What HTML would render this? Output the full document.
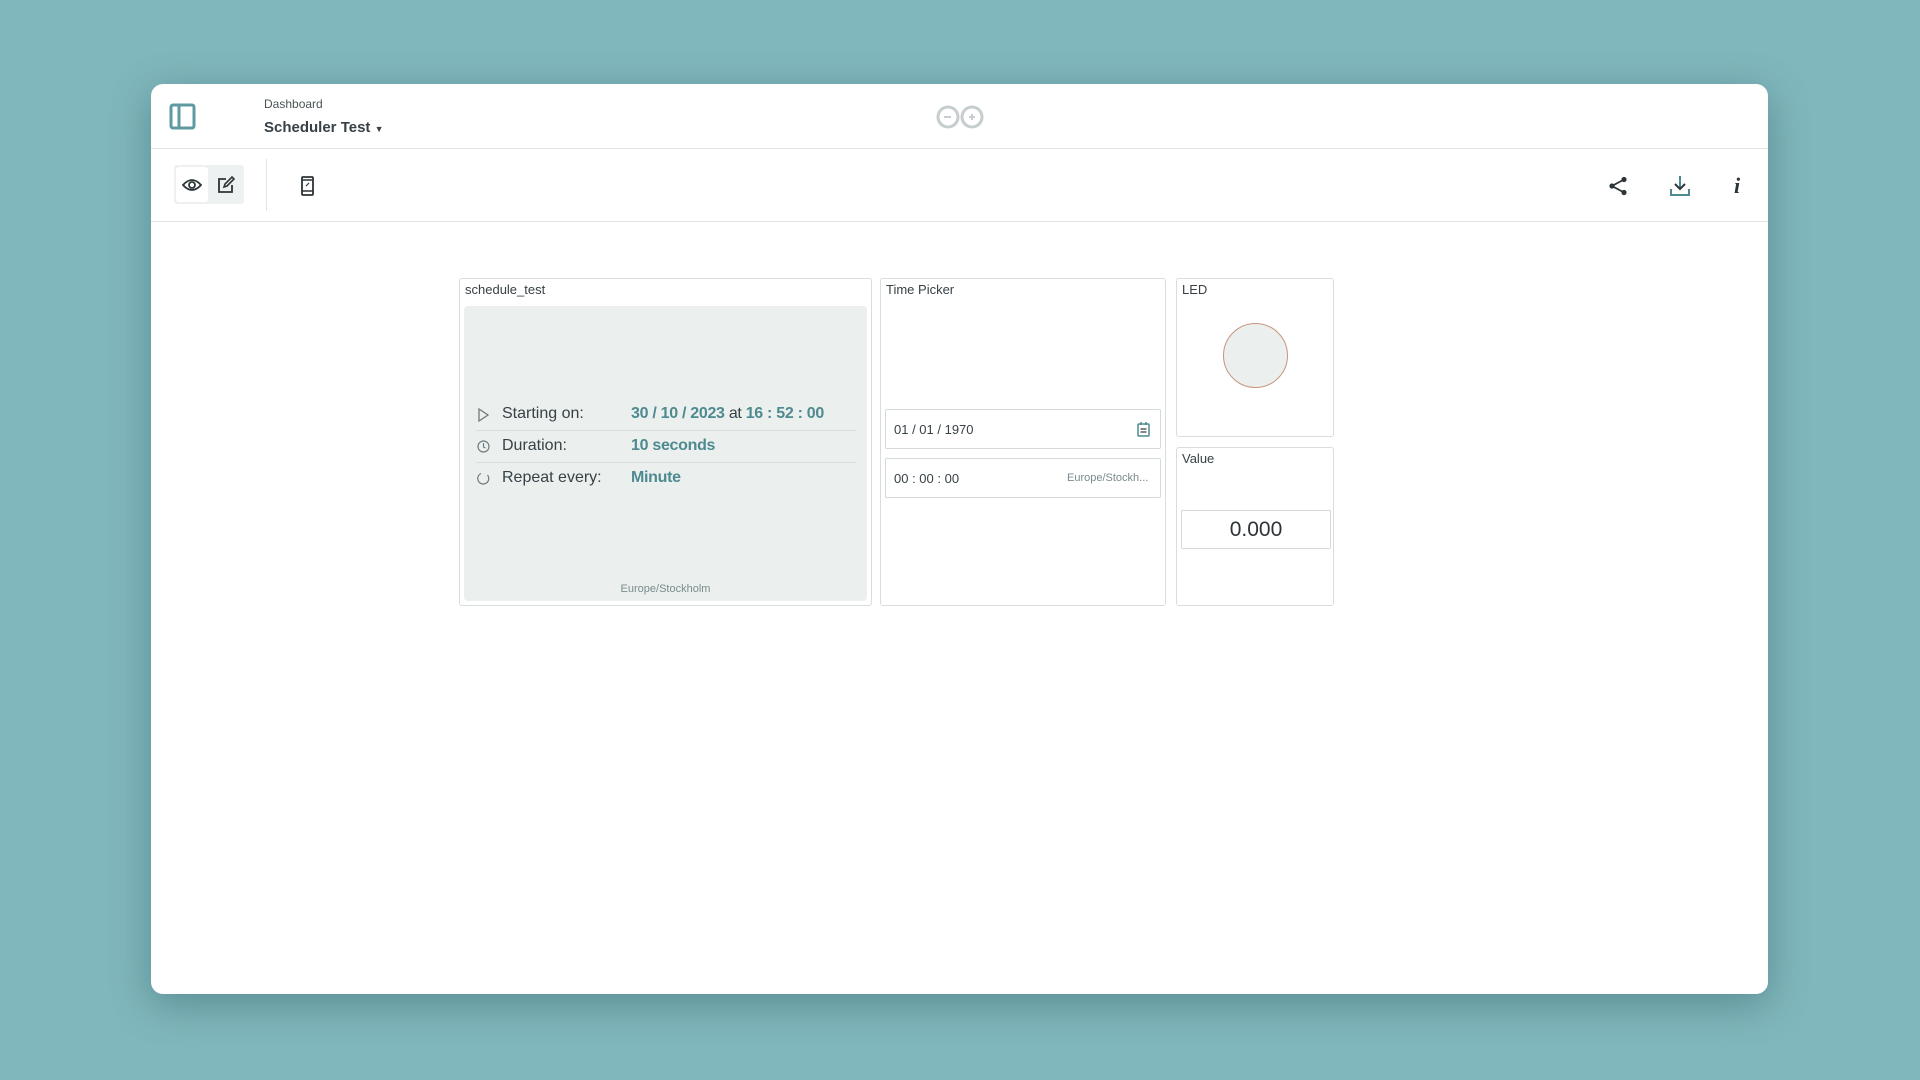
<!DOCTYPE html>
<html><head><meta charset="utf-8"><style>
*{box-sizing:border-box;margin:0;padding:0}
body{width:1920px;height:1080px;background:#80b7bc;font-family:"Liberation Sans",sans-serif;color:#374146;position:relative;overflow:hidden}
.card{position:absolute;left:151px;top:84px;width:1617px;height:910px;background:#fff;border-radius:12px;box-shadow:0 10px 40px rgba(40,90,95,.45);overflow:hidden}
.abs{position:absolute}
.w{position:absolute;border:1px solid #d8dedd;border-radius:3px;background:#fff}
.wt{position:absolute;left:5px;top:3px;font-size:13px;color:#374146}
.row{position:absolute;left:0;width:100%;font-size:16px}
.lab{position:absolute;left:38px}
.val{position:absolute;left:167px;color:#4e8a8f;font-weight:bold;letter-spacing:-0.3px}
.inp{position:absolute;border:1px solid #d3dad9;border-radius:2px;background:#fff;font-size:13px}
</style></head><body>
<div class="card">
 <svg class="abs" style="left:18px;top:19px" width="27" height="27" viewBox="0 0 27 27"><rect x="2" y="2" width="23" height="23" rx="2" fill="none" stroke="#5f9aa0" stroke-width="3"/><line x1="10" y1="2" x2="10" y2="25" stroke="#5f9aa0" stroke-width="3"/></svg>
 <div class="abs" style="left:113px;top:13px;font-size:12px;color:#4a5457">Dashboard</div>
 <div class="abs" style="left:113px;top:35px;font-size:15px;font-weight:bold;color:#374146">Scheduler Test <span style="font-size:9px">▼</span></div>
 <svg class="abs" style="left:784px;top:21px" width="50" height="24" viewBox="0 0 50 24"><circle cx="13" cy="12" r="10" fill="none" stroke="#c5cdce" stroke-width="3"/><circle cx="37" cy="12" r="10" fill="none" stroke="#c5cdce" stroke-width="3"/><line x1="9" y1="12" x2="16" y2="12" stroke="#c5cdce" stroke-width="2"/><line x1="34" y1="12" x2="40" y2="12" stroke="#c5cdce" stroke-width="2"/><line x1="37" y1="9" x2="37" y2="15" stroke="#c5cdce" stroke-width="2"/></svg>
 <div class="abs" style="left:0;top:64px;width:100%;height:1px;background:#dfe5e4"></div>
 <div class="abs" style="left:23px;top:81px;width:70px;height:39px;background:#edf1f1;border-radius:3px"></div>
 <div class="abs" style="left:25px;top:83px;width:32px;height:35px;background:#fff;border-radius:3px"></div>
 <svg class="abs" style="left:31px;top:93px" width="20" height="16" viewBox="0 0 20 16"><path d="M1 8 Q10 -2 19 8 Q10 18 1 8Z" fill="none" stroke="#2c3437" stroke-width="1.8"/><circle cx="10" cy="8" r="3" fill="none" stroke="#2c3437" stroke-width="1.8"/></svg>
 <svg class="abs" style="left:66px;top:92px" width="18" height="18" viewBox="0 0 18 18"><path d="M9 3H2v13h13V9" fill="none" stroke="#2c3437" stroke-width="1.8"/><path d="M7 11l1-3 7-7 2 2-7 7z" fill="none" stroke="#2c3437" stroke-width="1.6"/></svg>
 <div class="abs" style="left:115px;top:75px;width:1px;height:52px;background:#dfe5e4"></div>
 <svg class="abs" style="left:150px;top:92px" width="13" height="20" viewBox="0 0 13 20"><rect x="1" y="1" width="11" height="18" rx="1" fill="none" stroke="#2c3437" stroke-width="1.8"/><line x1="1" y1="4" x2="12" y2="4" stroke="#2c3437" stroke-width="1.5"/><line x1="1" y1="15" x2="12" y2="15" stroke="#2c3437" stroke-width="1.5"/><path d="M5 10l3-3" stroke="#2c3437" stroke-width="1.2"/></svg>
 <svg class="abs" style="left:1457px;top:92px" width="20" height="20" viewBox="0 0 20 20"><circle cx="16" cy="3.5" r="2.6" fill="#2c3437"/><circle cx="4" cy="10" r="2.6" fill="#2c3437"/><circle cx="16" cy="16.5" r="2.6" fill="#2c3437"/><path d="M16 3.5L4 10L16 16.5" fill="none" stroke="#2c3437" stroke-width="1.8"/></svg>
 <svg class="abs" style="left:1518px;top:91px" width="22" height="22" viewBox="0 0 22 22"><line x1="11" y1="1" x2="11" y2="14" stroke="#4e8a8f" stroke-width="2"/><path d="M6 9l5 5 5-5" fill="none" stroke="#2c3437" stroke-width="2"/><path d="M2 14v6h18v-6" fill="none" stroke="#4e8a8f" stroke-width="2"/></svg>
 <div class="abs" style="left:1583px;top:89px;font-size:22px;font-weight:bold;font-style:italic;font-family:'Liberation Serif',serif;color:#2c3437">i</div>
 <div class="abs" style="left:0;top:137px;width:100%;height:1px;background:#dfe5e4"></div>

 <div class="w" style="left:308px;top:194px;width:413px;height:328px">
  <div class="wt">schedule_test</div>
  <div class="abs" style="left:4px;top:27px;width:403px;height:295px;background:#ebf0ef;border-radius:4px">
   <div class="row" style="top:99px"><svg class="abs" style="left:13px;top:3px" width="12" height="14" viewBox="0 0 12 14"><path d="M2 1l9 6-9 6z" fill="none" stroke="#6e7c80" stroke-width="1.3"/></svg><span class="lab">Starting on:</span><span class="val">30 / 10 / 2023 <span style="font-weight:normal;color:#374146">at</span> 16 : 52 : 00</span></div>
   <div class="abs" style="left:12px;top:124px;width:380px;height:1px;background:#d6dddc"></div>
   <div class="row" style="top:131px"><svg class="abs" style="left:13px;top:3px" width="13" height="13" viewBox="0 0 13 13"><circle cx="6.5" cy="6.5" r="5.5" fill="none" stroke="#6e7c80" stroke-width="1.2"/><path d="M6.5 3v4l2 1" fill="none" stroke="#6e7c80" stroke-width="1.2"/></svg><span class="lab">Duration:</span><span class="val">10 seconds</span></div>
   <div class="abs" style="left:12px;top:156px;width:380px;height:1px;background:#d6dddc"></div>
   <div class="row" style="top:163px"><svg class="abs" style="left:13px;top:3px" width="13" height="13" viewBox="0 0 13 13"><path d="M10.5 3A5.5 5.5 0 1 1 4 1.5" fill="none" stroke="#6e7c80" stroke-width="1.2"/></svg><span class="lab">Repeat every:</span><span class="val">Minute</span></div>
   <div class="abs" style="left:0;top:277px;width:100%;text-align:center;font-size:11px;color:#7a8a8d">Europe/Stockholm</div>
  </div>
 </div>
 <div class="w" style="left:729px;top:194px;width:286px;height:328px">
  <div class="wt">Time Picker</div>
  <div class="inp" style="left:4px;top:130px;width:276px;height:40px"><span class="abs" style="left:8px;top:12px">01 / 01 / 1970</span>
   <svg class="abs" style="left:251px;top:12px" width="13" height="15" viewBox="0 0 13 15"><rect x="1" y="2" width="11" height="12" rx="1" fill="none" stroke="#4e8a8f" stroke-width="1.5"/><line x1="4" y1="0" x2="4" y2="3" stroke="#4e8a8f" stroke-width="1.5"/><line x1="9" y1="0" x2="9" y2="3" stroke="#4e8a8f" stroke-width="1.5"/><line x1="3.5" y1="7" x2="9.5" y2="7" stroke="#2c3437" stroke-width="1.2"/><line x1="3.5" y1="10" x2="9.5" y2="10" stroke="#2c3437" stroke-width="1.2"/></svg></div>
  <div class="inp" style="left:4px;top:179px;width:276px;height:40px"><span class="abs" style="left:8px;top:12px">00 : 00 : 00</span><span class="abs" style="left:181px;top:13px;font-size:11px;color:#7a8a8d">Europe/Stockh...</span></div>
 </div>
 <div class="w" style="left:1025px;top:194px;width:158px;height:159px">
  <div class="wt">LED</div>
  <div class="abs" style="left:46px;top:44px;width:65px;height:65px;border-radius:50%;background:#ebf0ef;border:1.5px solid #c7957a"></div>
 </div>
 <div class="w" style="left:1025px;top:363px;width:158px;height:159px">
  <div class="wt">Value</div>
  <div class="inp" style="left:4px;top:62px;width:150px;height:39px;text-align:center;font-size:21px;line-height:37px;color:#2c3437">0.000</div>
 </div>
</div>
</body></html>
